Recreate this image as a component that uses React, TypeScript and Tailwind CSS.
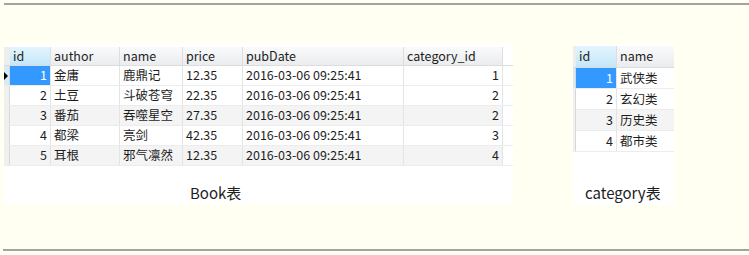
import React from "react";

type Col = { key: string; label: string; w: string; right?: boolean };

const BOOK_COLS: Col[] = [
  { key: "id", label: "id", w: "w-[41px]", right: true },
  { key: "author", label: "author", w: "w-[69px]" },
  { key: "name", label: "name", w: "w-[63px]" },
  { key: "price", label: "price", w: "w-[60px]" },
  { key: "pubDate", label: "pubDate", w: "w-[161px]" },
  { key: "category_id", label: "category_id", w: "w-[99px]", right: true },
];

const BOOKS: Record<string, string>[] = [
  { id: "1", author: "金庸", name: "鹿鼎记", price: "12.35", pubDate: "2016-03-06 09:25:41", category_id: "1" },
  { id: "2", author: "土豆", name: "斗破苍穹", price: "22.35", pubDate: "2016-03-06 09:25:41", category_id: "2" },
  { id: "3", author: "番茄", name: "吞噬星空", price: "27.35", pubDate: "2016-03-06 09:25:41", category_id: "2" },
  { id: "4", author: "都梁", name: "亮剑", price: "42.35", pubDate: "2016-03-06 09:25:41", category_id: "3" },
  { id: "5", author: "耳根", name: "邪气凛然", price: "12.35", pubDate: "2016-03-06 09:25:41", category_id: "4" },
];

const CAT_COLS: Col[] = [
  { key: "id", label: "id", w: "w-[41px]", right: true },
  { key: "name", label: "name", w: "w-[57px]" },
];

const CATS: Record<string, string>[] = [
  { id: "1", name: "武侠类" },
  { id: "2", name: "玄幻类" },
  { id: "3", name: "历史类" },
  { id: "4", name: "都市类" },
];

const FONT = "font-['Noto_Sans_CJK_SC','Noto_Sans',sans-serif]";

function Grid({
  cols,
  rows,
  gutter,
  headH,
  rowH,
  arrow = true,
  lastBorder = true,
}: {
  cols: Col[];
  rows: Record<string, string>[];
  gutter: string;
  headH: string;
  rowH: string;
  arrow?: boolean;
  lastBorder?: boolean;
}) {
  return (
    <div className={`text-[12.5px] text-[#1e1e1e] ${FONT}`}>
      <div className={`flex ${headH} border-b border-[#dadcdf]`}>
        <div className={`${gutter} bg-[#eceef0]`} />
        {cols.map((c, i) => (
          <div
            key={c.key}
            className={[
              c.w,
              "flex items-center px-[3px] leading-none",
              i === 0
                ? "bg-gradient-to-b from-[#e4f5fd] to-[#c3e7f8]"
                : "bg-gradient-to-b from-[#f9fafb] to-[#eaecee]",
              i < cols.length - 1 || lastBorder ? "border-r border-[#dcdee0]" : "",
            ].join(" ")}
          >
            {c.label}
          </div>
        ))}
      </div>
      {rows.map((r, ri) => {
        const sel = ri === 0;
        const alt = ri % 2 === 0 && !sel;
        return (
          <div key={ri} className={`flex ${rowH} border-b border-[#ececec]`}>
            <div
              className={[
                gutter,
                "relative border-r border-[#d8d8d8]",
                sel ? "bg-[#d5ebf8]" : "bg-[#eef0f2]",
              ].join(" ")}
            >
              {sel && arrow && (
                <span className="absolute left-0 top-[6px] h-0 w-0 border-y-[4px] border-l-[4px] border-y-transparent border-l-black" />
              )}
            </div>
            {cols.map((c, i) => (
              <div
                key={c.key}
                className={[
                  c.w,
                  "flex items-center px-[3px] leading-none whitespace-nowrap",
                  c.right ? "justify-end" : "",
                  i === 0 && sel ? "bg-[#3399ff] text-white" : alt ? "bg-[#f4f4f4]" : "bg-white",
                  i < cols.length - 1 || lastBorder ? "border-r border-[#e4e4e4]" : "",
                ].join(" ")}
              >
                {r[c.key]}
              </div>
            ))}
          </div>
        );
      })}
    </div>
  );
}

export default function App() {
  return (
    <div className="w-[749px] h-[255px] bg-[#fffff2] pt-[3px] overflow-hidden">
      <div className="ml-[4px] h-[2px] bg-[#a3a3a3]" />
      <div className="flex items-start mt-[39px]">
        <div className="ml-[4px] w-[509px] h-[160px] bg-white pt-[3px]">
          <Grid cols={BOOK_COLS} rows={BOOKS} gutter="w-[6px]" headH="h-[19px]" rowH="h-[20px]" />
          <div className={`mt-[16px] pl-[186px] text-[15px] text-[#1e1e1e] ${FONT}`}>Book表</div>
        </div>
        <div className="ml-[60px] w-[101px] h-[161px] bg-white pt-[2px]">
          <Grid
            cols={CAT_COLS}
            rows={CATS}
            gutter="w-[3px]"
            headH="h-[22px]"
            rowH="h-[21px]"
            arrow={false}
            lastBorder={false}
          />
          <div className={`mt-[30px] pl-[12px] text-[15px] text-[#1e1e1e] ${FONT}`}>category表</div>
        </div>
      </div>
      <div className="ml-[3px] mt-[44px] h-[2px] bg-[#a3a3a3]" />
    </div>
  );
}
